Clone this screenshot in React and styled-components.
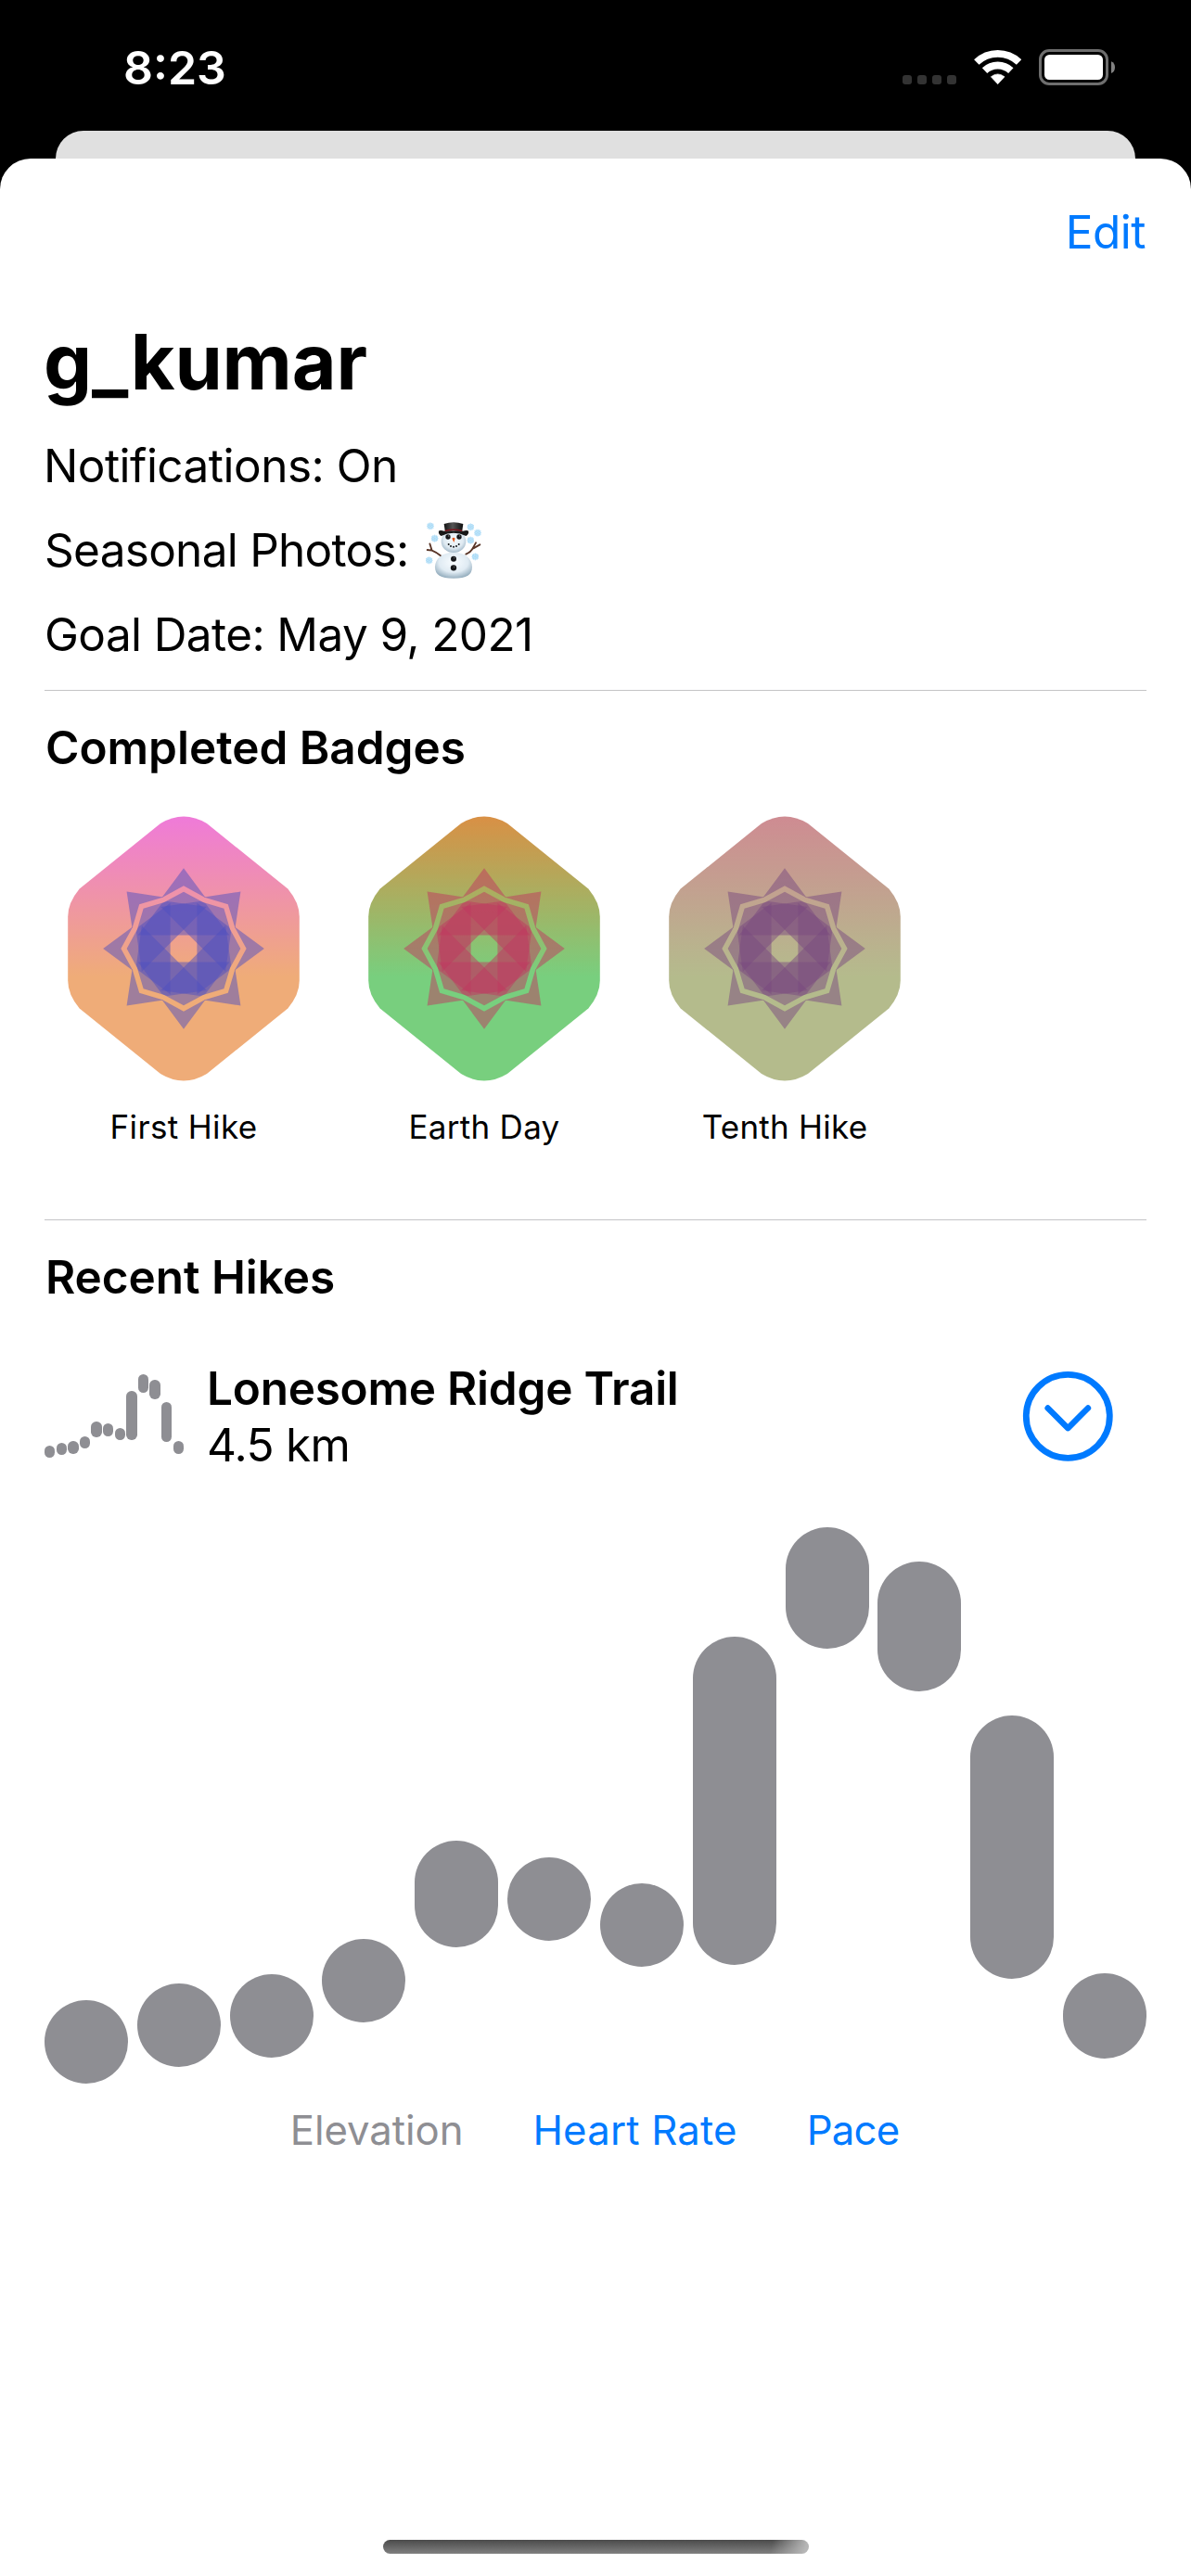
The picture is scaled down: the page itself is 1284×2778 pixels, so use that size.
import React from "react";
import styled, { createGlobalStyle } from "styled-components";

const BLUE = "#007aff";
const GRAY = "#8e8e93";

const GlobalStyle = createGlobalStyle`
  body {
    margin: 0;
    background: #000;
    font-family: Inter, "Liberation Sans", sans-serif;
    color: #000;
  }
`;

const Screen = styled.div`
  display: flex;
  flex-direction: column;
  width: 1284px;
  height: 2778px;
  overflow: hidden;
  background: #000;
`;

const StatusBar = styled.header`
  display: flex;
  justify-content: space-between;
  flex: none;
  box-sizing: border-box;
  height: 141px;
  padding: 43px 82px 0 133px;
`;

const Clock = styled.time`
  color: #fff;
  font-size: 50px;
  font-weight: 600;
  line-height: 60px;
  letter-spacing: 0;
`;

const StatusIcons = styled.div`
  display: flex;
  gap: 19px;
  padding-top: 10px;

  svg {
    display: block;
    height: 39px;
  }
`;

const BackCard = styled.div`
  flex: none;
  height: 70px;
  margin: 0 60px -40px;
  border-radius: 30px 30px 0 0;
  background: #e0e0e0;
`;

const Sheet = styled.main`
  position: relative;
  display: flex;
  flex-direction: column;
  flex: 1;
  box-sizing: border-box;
  padding: 49px 48px 24px;
  border-radius: 33px 33px 0 0;
  background: #fff;
`;

const EditButton = styled.button`
  align-self: flex-end;
  margin: 0 1px 60px 0;
  padding: 0;
  border: 0;
  background: none;
  color: ${BLUE};
  font: 400 49.5px/60px Inter, sans-serif;
  letter-spacing: -0.5px;
`;

const Title = styled.h1`
  margin: 0 0 31px -1px;
  font-size: 82.5px;
  font-weight: 700;
  line-height: 100px;
  letter-spacing: -0.2px;
`;

const Details = styled.div`
  display: flex;
  flex-direction: column;
  gap: 29px;
`;

const Detail = styled.div`
  display: flex;
  align-items: center;
  height: 62px;
  margin-left: ${(p) => p.$nudge || 0}px;
  font-size: 49.5px;
  line-height: 62px;
  letter-spacing: ${(p) => p.$tracking}px;
  white-space: pre;

  svg {
    flex: none;
    margin-left: 16px;
  }
`;

const Divider = styled.hr`
  width: 100%;
  height: 1px;
  margin: ${(p) => p.$gap}px 0 30px;
  border: 0;
  background: #c4c4c6;
`;

const SectionTitle = styled.h2`
  margin: 0 0 0 1px;
  font-size: 49.5px;
  font-weight: 600;
  line-height: 62px;
  letter-spacing: ${(p) => p.$tracking}px;
`;

const Badges = styled.div`
  display: flex;
  gap: 24px;
  margin-top: 36px;
`;

const BadgeItem = styled.figure`
  display: flex;
  flex-direction: column;
  align-items: center;
  gap: 21px;
  width: 300px;
  margin: 0;
`;

const BadgeArt = styled.svg`
  display: block;
  filter: ${(p) => p.$filter};
`;

const BadgeLabel = styled.figcaption`
  font-size: 35px;
  line-height: 43px;
  letter-spacing: ${(p) => p.$tracking}px;
`;

const HikeRow = styled.div`
  display: flex;
  align-items: center;
  height: 122px;
  margin: 58px 0 59px;
`;

const HikeInfo = styled.div`
  flex: 1;
  padding-left: 25px;
  font-size: 49.5px;
`;

const HikeName = styled.div`
  font-weight: 600;
  line-height: 62px;
  letter-spacing: -0.25px;
`;

const HikeDistance = styled.div`
  line-height: 60px;
  letter-spacing: -0.7px;
`;

const ToggleButton = styled.button`
  margin: 0 36px 0 0;
  padding: 0;
  border: 0;
  background: none;

  svg {
    display: block;
  }
`;

const Graph = styled.div`
  display: flex;
  flex: none;
  gap: ${(p) => p.$width / 120}px;
  width: ${(p) => p.$width}px;
  height: ${(p) => p.$height}px;
`;

const Capsule = styled.div`
  flex: 1;
  border-radius: ${(p) => p.$radius}px;
  background: ${GRAY};
`;

const Tabs = styled.nav`
  display: flex;
  justify-content: center;
  gap: 75px;
  margin: 24px 2px 0 0;
`;

const Tab = styled.button`
  padding: 0;
  border: 0;
  background: none;
  color: ${(p) => (p.$active ? GRAY : BLUE)};
  font: 400 43.7px/54px Inter, sans-serif;
  letter-spacing: ${(p) => p.$tracking}px;
`;

const HomeIndicator = styled.div`
  align-self: center;
  width: 459px;
  height: 15px;
  margin: auto 0 0 1px;
  border-radius: 7.5px;
  background:
    linear-gradient(100deg, rgba(190, 190, 190, 0) 91%, rgba(190, 190, 190, 0.9) 99%),
    linear-gradient(#4b4b4b, #808080);
`;

const SignalDots = () => (
  <svg width="58" height="39" viewBox="0 0 58 39" fill="#333">
    {[0, 16, 32, 48].map((x) => (
      <rect key={x} x={x} y="28" width="10" height="10" rx="3" />
    ))}
  </svg>
);

const Wifi = () => (
  <svg width="51" height="39" viewBox="0 0 153 117" fill="none" stroke="#fff" strokeWidth="23.5">
    <path d="M8.4 41.9A99.5 99.5 0 0 1 145.6 41.9" />
    <path d="M34.6 69.5A61.5 61.5 0 0 1 119.4 69.5" />
    <path d="M55 89.4Q77 72 99 89.4L77 113Z" fill="#fff" strokeWidth="2" strokeLinejoin="round" />
  </svg>
);

const Battery = () => (
  <svg width="82" height="39" viewBox="0 0 246 117">
    <rect x="4.5" y="4.5" width="216" height="108" rx="29" fill="none" stroke="#6e6e6e" strokeWidth="9" />
    <rect x="18" y="18" width="189" height="81" rx="16" fill="#fff" />
    <path d="M234 40C242 43 246 50 246 59S242 75 234 78Z" fill="#828282" />
  </svg>
);

const FLAKES = [[72, 82], [86, 122], [202, 85], [225, 104], [202, 128], [217, 181], [68, 193]];

const Snowman = () => (
  <svg width="66" height="66" viewBox="48 60 198 198" role="img" aria-label="Winter">
    <defs>
      <radialGradient id="snow-head" cx="0.5" cy="0.42" r="0.6">
        <stop offset="0" stopColor="#f6fbfe" />
        <stop offset="0.65" stopColor="#dfeaf2" />
        <stop offset="1" stopColor="#9fb6c6" />
      </radialGradient>
      <radialGradient id="snow-body" cx="0.5" cy="0.38" r="0.65">
        <stop offset="0" stopColor="#f8fcff" />
        <stop offset="0.6" stopColor="#e0ebf3" />
        <stop offset="1" stopColor="#8fa9ba" />
      </radialGradient>
      <linearGradient id="hat">
        <stop offset="0" stopColor="#111" />
        <stop offset="0.45" stopColor="#555" />
        <stop offset="1" stopColor="#0c0c0c" />
      </linearGradient>
    </defs>
    <g stroke="#a9daf6" strokeWidth="2.4" strokeLinecap="round">
      {FLAKES.map(([x, y]) => (
        <g key={`${x}-${y}`} transform={`translate(${x} ${y})`}>
          <circle r="10" fill="#d5eefc" stroke="none" />
          {[0, 60, 120].map((a) => (
            <path key={a} d="M0-11V11M-4-9L0-5L4-9M-4 9L0 5L4 9" fill="none" transform={`rotate(${a})`} />
          ))}
        </g>
      ))}
    </g>
    <g fill="none" stroke="#593527" strokeWidth="5.5" strokeLinecap="round" strokeLinejoin="round">
      <path d="M105 178Q90 166 77 161L62 159M77 161L70 139" />
      <path d="M187 173Q204 166 210 152L219 136M211 154L232 142" />
    </g>
    <path
      d="M147 167C183 167 207 187 207 214C207 241 190 251 147 251S87 241 87 214C87 187 111 167 147 167Z"
      fill="url(#snow-body)"
    />
    <ellipse cx="147" cy="132" rx="40" ry="36" fill="url(#snow-head)" />
    <path d="M99 98Q103 94 117 98H177Q191 94 195 98Q198 107 187 114Q147 95 107 114Q97 108 99 98Z" fill="#171717" />
    <path d="M116 75Q147 64 178 75L174 103Q147 94 120 103Z" fill="url(#hat)" />
    <path d="M119 95Q147 88 175 95L174 100Q147 92 120 100Z" fill="#7d141d" />
    <g fill="#15171a">
      <circle cx="129" cy="117" r="8" />
      <circle cx="165" cy="117" r="8" />
      <circle cx="131" cy="141" r="3" />
      <circle cx="138" cy="147" r="3" />
      <circle cx="147" cy="149" r="3" />
      <circle cx="156" cy="147" r="3" />
      <circle cx="164" cy="141" r="3" />
      <circle cx="147" cy="188" r="9" />
      <circle cx="147" cy="217" r="9.5" />
    </g>
    <g fill="#777">
      <circle cx="131" cy="114" r="2" />
      <circle cx="167" cy="114" r="2" />
      <circle cx="149" cy="185" r="2" />
      <circle cx="149" cy="214" r="2" />
    </g>
    <path d="M142 122Q147 117 152 122L148 135Z" fill="#e2571e" />
  </svg>
);

const Chevron = () => (
  <svg width="98" height="98" viewBox="0 0 98 98" fill="none" stroke={BLUE}>
    <circle cx="49.3" cy="49.3" r="45" strokeWidth="6.8" />
    <path d="M27.6 40.4L49.3 62.2L71 40.4" strokeWidth="6.4" strokeLinecap="round" strokeLinejoin="round" />
  </svg>
);

/* One petal of the badge symbol: a peak above a notched mountain base. */
const PETAL =
  "M210 12.6L115.08 141.12L210 89.46L304.92 141.12ZM210 114.66L115.08 166.32L12.6 302.4H407.4L304.92 166.32Z";

const Badge = ({ id, label, filter, tracking }) => (
  <BadgeItem>
    <BadgeArt width="300" height="300" viewBox="0 0 300 300" $filter={filter}>
      <defs>
        <linearGradient id={id} gradientUnits="userSpaceOnUse" x1="0" y1="0" x2="0" y2="180">
          <stop offset="0" stopColor="#ef78dd" />
          <stop offset="1" stopColor="#efac78" />
        </linearGradient>
      </defs>
      <path
        d="M262.32 85.5L174.96 15Q150 0 125.04 15L37.68 85.5Q25.2 100.5 25.2 115.5V184.5Q25.2 199.5 37.68 214.5L125.04 285Q150 300 174.96 285L262.32 214.5Q274.8 199.5 274.8 184.5V115.5Q274.8 100.5 262.32 85.5Z"
        fill={`url(#${id})`}
      />
      <g fill="#4f4fbf" fillOpacity="0.5">
        {Array.from({ length: 8 }, (_, i) => (
          <path
            key={i}
            d={PETAL}
            transform={`translate(150 150) scale(0.25) rotate(${i * 45}) translate(-210 -360)`}
          />
        ))}
      </g>
    </BadgeArt>
    <BadgeLabel $tracking={tracking}>{label}</BadgeLabel>
  </BadgeItem>
);

/* Elevation range per segment as [top, bottom], on a 600-unit scale. */
const ELEVATION = [
  [510, 600],
  [492, 582],
  [482, 572],
  [444, 534],
  [338, 453],
  [356, 446],
  [384, 474],
  [118, 472],
  [0, 131],
  [37, 177],
  [203, 487],
  [481, 573],
];

const HikeGraph = ({ width, height }) => {
  const k = height / 600;
  return (
    <Graph $width={width} $height={height}>
      {ELEVATION.map(([top, bottom], i) => (
        <Capsule
          key={i}
          $radius={width / 26}
          style={{ marginTop: top * k, height: (bottom - top) * k }}
        />
      ))}
    </Graph>
  );
};

export default function App() {
  return (
    <Screen>
      <GlobalStyle />
      <StatusBar>
        <Clock>8:23</Clock>
        <StatusIcons>
          <SignalDots />
          <Wifi />
          <Battery />
        </StatusIcons>
      </StatusBar>
      <BackCard />
      <Sheet>
        <EditButton>Edit</EditButton>
        <Title>g_kumar</Title>
        <Details>
          <Detail $tracking={-0.52} $nudge={-1}>Notifications: On</Detail>
          <Detail $tracking={-0.72}>
            Seasonal Photos:
            <Snowman />
          </Detail>
          <Detail $tracking={-0.61}>Goal Date: May 9, 2021</Detail>
        </Details>
        <Divider $gap={29} />
        <SectionTitle $tracking={-0.02}>Completed Badges</SectionTitle>
        <Badges>
          <Badge id="first" label="First Hike" filter="none" tracking={0.35} />
          <Badge id="earth" label="Earth Day" filter="hue-rotate(90deg)" tracking={0.3} />
          <Badge id="tenth" label="Tenth Hike" filter="grayscale(0.5) hue-rotate(45deg)" tracking={0.24} />
        </Badges>
        <Divider $gap={78} />
        <SectionTitle $tracking={-0.05}>Recent Hikes</SectionTitle>
        <HikeRow>
          <HikeGraph width={150} height={90} />
          <HikeInfo>
            <HikeName>Lonesome Ridge Trail</HikeName>
            <HikeDistance>4.5 km</HikeDistance>
          </HikeInfo>
          <ToggleButton aria-label="Toggle details">
            <Chevron />
          </ToggleButton>
        </HikeRow>
        <HikeGraph width={1188} height={600} />
        <Tabs>
          <Tab $active $tracking={-0.05}>Elevation</Tab>
          <Tab $tracking={0.18}>Heart Rate</Tab>
          <Tab $tracking={-0.8}>Pace</Tab>
        </Tabs>
        <HomeIndicator />
      </Sheet>
    </Screen>
  );
}
